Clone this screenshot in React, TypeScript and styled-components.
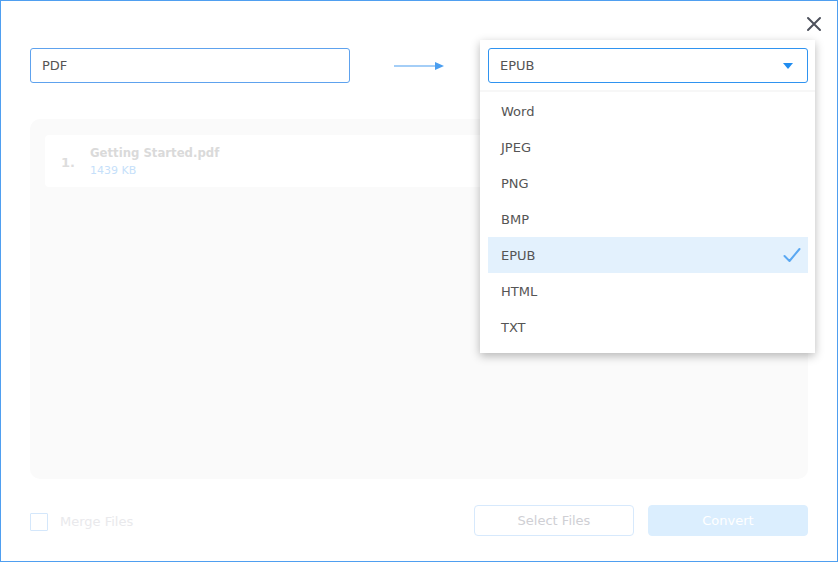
import React from "react";
import styled, { createGlobalStyle } from "styled-components";

const GlobalStyle = createGlobalStyle`
  html, body {
    margin: 0;
    padding: 0;
    background: #ffffff;
  }
  * {
    box-sizing: border-box;
  }
`;

const formats = ["Word", "JPEG", "PNG", "BMP", "EPUB", "HTML", "TXT"];

const Dialog = styled.div`
  position: relative;
  width: 838px;
  height: 562px;
  border: 1px solid #4f9ff0;
  background: #ffffff;
  padding: 47px 29px 0 29px;
  font-family: "DejaVu Sans", Verdana, sans-serif;
  font-size: 13px;
  color: #555555;
  display: flex;
  flex-direction: column;
`;

const CloseButton = styled.button`
  position: absolute;
  top: 14px;
  right: 14px;
  width: 18px;
  height: 18px;
  padding: 0;
  border: none;
  background: none;
  display: flex;
  align-items: center;
  justify-content: center;
  cursor: pointer;
`;

const TopRow = styled.div`
  display: flex;
  align-items: center;
  height: 35px;
`;

const Field = styled.div<{ $active?: boolean }>`
  position: relative;
  z-index: 2;
  width: 320px;
  height: 35px;
  border: 1px solid ${(p) => (p.$active ? "#2f93f0" : "#5ea2ee")};
  border-radius: 3px;
  background: #ffffff;
  display: flex;
  align-items: center;
  justify-content: space-between;
  padding: 0 14px 0 11px;
  color: #555555;
`;

const ArrowBox = styled.div`
  flex: 1;
  display: flex;
  justify-content: center;
  align-items: center;
`;

const SelectWrap = styled.div`
  position: relative;
`;

const Menu = styled.div`
  position: absolute;
  z-index: 1;
  top: -8px;
  left: -8px;
  width: 335px;
  background: #ffffff;
  padding: 53px 7px 8px 8px;
  box-shadow: 0 3px 9px rgba(0, 0, 0, 0.28);
`;

const MenuList = styled.ul`
  list-style: none;
  margin: 0;
  padding: 0;
  position: relative;
  &::before {
    content: "";
    position: absolute;
    top: -3px;
    left: -8px;
    right: -7px;
    height: 2px;
    background: #f7f7f7;
  }
`;

const MenuItem = styled.li<{ $selected?: boolean }>`
  height: 36px;
  display: flex;
  align-items: center;
  justify-content: space-between;
  padding: 0 7px 0 13px;
  background: ${(p) => (p.$selected ? "#e3f1fd" : "transparent")};
  color: #555555;
`;

const FileArea = styled.div`
  margin-top: 36px;
  height: 360px;
  background: #fafafa;
  border-radius: 10px;
  padding: 16px 15px;
`;

const FileCard = styled.div`
  height: 52px;
  background: #ffffff;
  border-radius: 4px;
  display: flex;
  align-items: center;
  padding: 0 0 0 16px;
`;

const FileIndex = styled.span`
  width: 29px;
  font-weight: bold;
  font-size: 13px;
  color: #dddddd;
  margin-top: 3px;
`;

const FileInfo = styled.div`
  display: flex;
  flex-direction: column;
  gap: 4px;
`;

const FileName = styled.span`
  font-weight: bold;
  font-size: 11.7px;
  color: #dadada;
`;

const FileSize = styled.span`
  font-size: 11px;
  color: #c6dffa;
`;

const BottomRow = styled.div`
  margin-top: 26px;
  display: flex;
  align-items: center;
  height: 31px;
`;

const Merge = styled.label`
  display: flex;
  align-items: center;
  gap: 12px;
  color: #e9e9ec;
  margin-top: 2px;
`;

const CheckBox = styled.span`
  width: 18px;
  height: 18px;
  border: 1px solid #d4e7fb;
  border-radius: 1px;
`;

const Spacer = styled.div`
  flex: 1;
`;

const Button = styled.button<{ $primary?: boolean }>`
  width: 160px;
  height: 31px;
  border-radius: 4px;
  font-family: inherit;
  font-size: 13px;
  border: 1px solid ${(p) => (p.$primary ? "#dbeefe" : "#d7e9fc")};
  background: ${(p) => (p.$primary ? "#dbeefe" : "#ffffff")};
  color: ${(p) => (p.$primary ? "#ffffff" : "#cfcfd4")};
  & + & {
    margin-left: 14px;
  }
`;

export default function App() {
  return (
    <>
      <GlobalStyle />
      <Dialog>
        <CloseButton aria-label="Close">
          <svg width="16" height="16" viewBox="0 0 16 16">
            <path d="M2 2 L14 14 M14 2 L2 14" stroke="#4d515c" strokeWidth="2" strokeLinecap="round" />
          </svg>
        </CloseButton>

        <TopRow>
          <Field>PDF</Field>
          <ArrowBox>
            <svg width="50" height="10" viewBox="0 0 50 10">
              <line x1="0" y1="5" x2="42" y2="5" stroke="#4a9ef0" strokeWidth="1.2" />
              <path d="M41 1 L50 5 L41 9 Z" fill="#4a9ef0" />
            </svg>
          </ArrowBox>
          <SelectWrap>
            <Field $active>
              EPUB
              <svg width="10" height="6" viewBox="0 0 10 6">
                <path d="M0 0 L10 0 L5 6 Z" fill="#1f8cf0" />
              </svg>
            </Field>
            <Menu>
              <MenuList>
                {formats.map((f) => (
                  <MenuItem key={f} $selected={f === "EPUB"}>
                    {f}
                    {f === "EPUB" && (
                      <svg width="18" height="16" viewBox="0 0 18 16">
                        <path
                          d="M1.5 9 L6.5 14 L16.5 2"
                          fill="none"
                          stroke="#5aa8f2"
                          strokeWidth="2"
                          strokeLinecap="round"
                          strokeLinejoin="round"
                        />
                      </svg>
                    )}
                  </MenuItem>
                ))}
              </MenuList>
            </Menu>
          </SelectWrap>
        </TopRow>

        <FileArea>
          <FileCard>
            <FileIndex>1.</FileIndex>
            <FileInfo>
              <FileName>Getting Started.pdf</FileName>
              <FileSize>1439 KB</FileSize>
            </FileInfo>
          </FileCard>
        </FileArea>

        <BottomRow>
          <Merge>
            <CheckBox />
            Merge Files
          </Merge>
          <Spacer />
          <Button>Select Files</Button>
          <Button $primary>Convert</Button>
        </BottomRow>
      </Dialog>
    </>
  );
}
